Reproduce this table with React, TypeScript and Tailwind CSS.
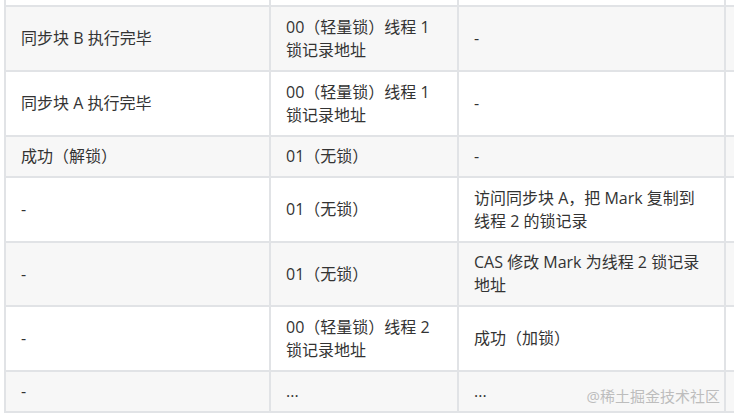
import React from "react";

type Row = { cells: React.ReactNode[]; gray: boolean; h: string };

const rows: Row[] = [
  {
    gray: true,
    h: "h-[65px]",
    cells: [
      "同步块 B 执行完毕",
      <>00（轻量锁）线程 1<br />锁记录地址</>,
      "-",
    ],
  },
  {
    gray: false,
    h: "h-[65px]",
    cells: [
      "同步块 A 执行完毕",
      <>00（轻量锁）线程 1<br />锁记录地址</>,
      "-",
    ],
  },
  { gray: true, h: "h-[41px]", cells: ["成功（解锁）", "01（无锁）", "-"] },
  {
    gray: false,
    h: "h-[65px]",
    cells: ["-", "01（无锁）", <>访问同步块 A，把 Mark 复制到<br />线程 2 的锁记录</>],
  },
  {
    gray: true,
    h: "h-[64px]",
    cells: ["-", "01（无锁）", <>CAS 修改 Mark 为线程 2 锁记录<br />地址</>],
  },
  {
    gray: false,
    h: "h-[65px]",
    cells: ["-", <>00（轻量锁）线程 2<br />锁记录地址</>, "成功（加锁）"],
  },
  { gray: true, h: "h-[41px]", cells: ["-", "...", "..."] },
];

const widths = ["w-[265px]", "w-[188px]", "w-[269px]"];
const pads = ["pl-[15px]", "pl-[15px]", "pl-[15px]"];

export default function App() {
  return (
    <div
      className="relative w-[734px] h-[418px] bg-white text-[#333333] text-[16px] leading-[23px] overflow-hidden"
      style={{ fontFamily: '"Open Sans", "Noto Sans CJK SC", sans-serif' }}
    >
      <div className="pl-[4px]">
        <div className="flex h-[7px] border-b-2 border-[#e1e3e6]">
          {widths.map((w, i) => (
            <div
              key={i}
              className={`${w} border-l-2 border-[#e1e3e6] ${i === 2 ? "border-r-2" : ""}`}
            />
          ))}
        </div>
        {rows.map((r, ri) => (
          <div
            key={ri}
            className={`flex ${r.h} border-b-2 border-[#e1e3e6] ${r.gray ? "bg-[#f7f7f7]" : "bg-white"}`}
          >
            {r.cells.map((c, ci) => (
              <div
                key={ci}
                className={`${widths[ci]} ${pads[ci]} flex items-center border-l-2 border-[#e1e3e6] ${ci === 2 ? "border-r-2" : ""}`}
              >
                <div>{c}</div>
              </div>
            ))}
          </div>
        ))}
      </div>
      <div className="absolute right-[14px] top-[385px] text-[15px] leading-[22px] text-[#bdbdbd]">
        @稀土掘金技术社区
      </div>
    </div>
  );
}
